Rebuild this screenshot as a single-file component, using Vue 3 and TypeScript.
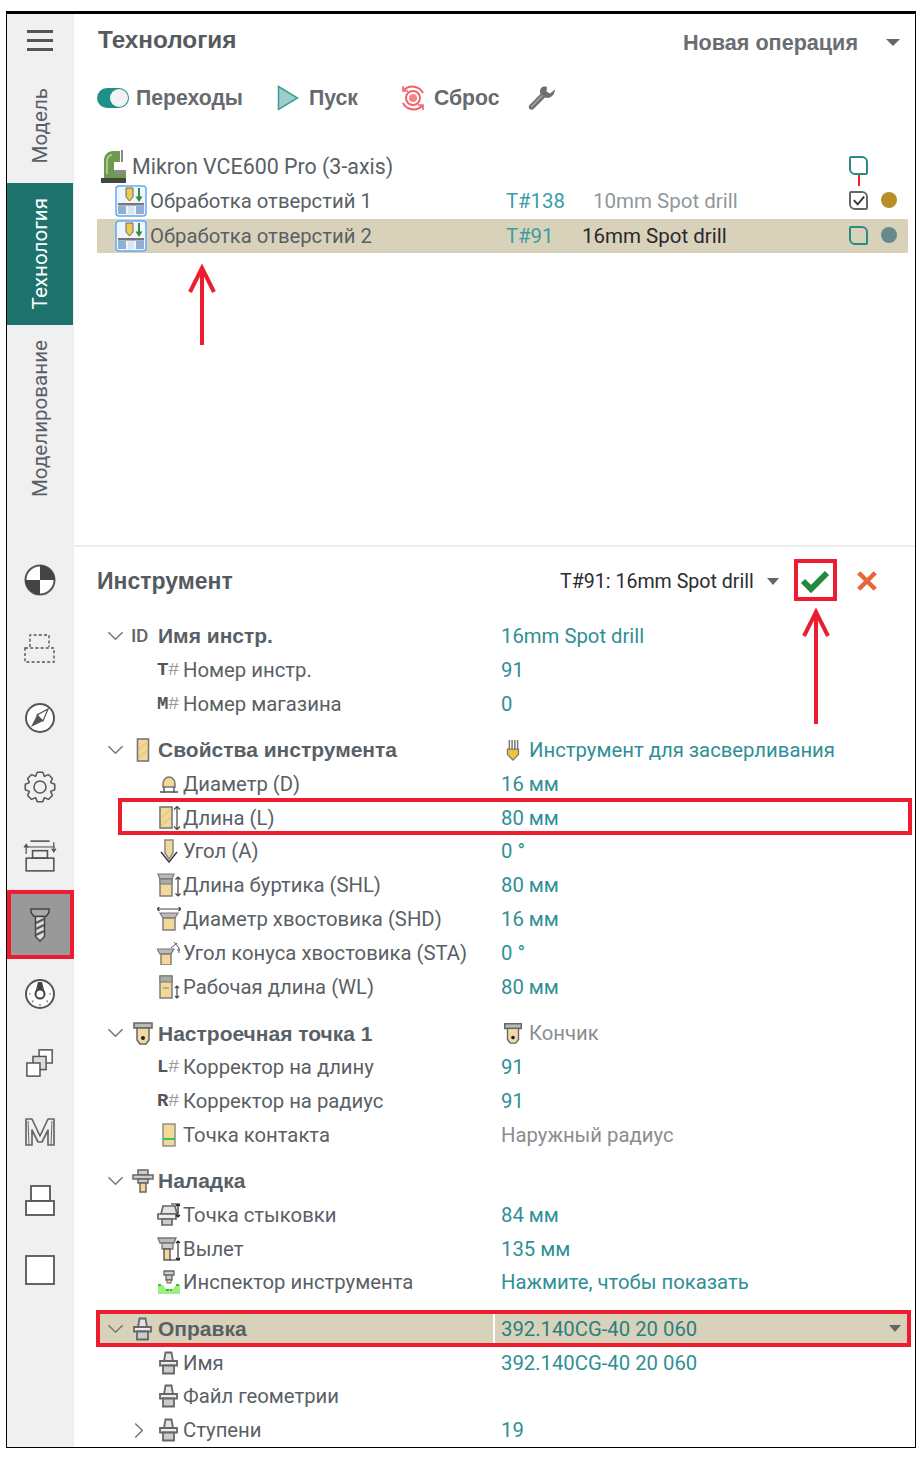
<script setup lang="ts">
type Row = {
  label: string
  head?: boolean
  arrow?: 'down' | 'right'
  icon?: string
  tag?: [string, string]
  val?: string
  muted?: boolean
  valIcon?: string
  hl?: boolean
}

const groups: Row[][] = [
  [
    { label: 'Имя инстр.', head: true, arrow: 'down', tag: ['ID', ''], val: '16mm Spot drill' },
    { label: 'Номер инстр.', tag: ['T', '#'], val: '91' },
    { label: 'Номер магазина', tag: ['M', '#'], val: '0' },
  ],
  [
    { label: 'Свойства инструмента', head: true, arrow: 'down', icon: 'i-bar', val: 'Инструмент для засверливания', valIcon: 'i-drill' },
    { label: 'Диаметр (D)', icon: 'i-dia', val: '16 мм' },
    { label: 'Длина (L)', icon: 'i-len', val: '80 мм' },
    { label: 'Угол (A)', icon: 'i-ang', val: '0 °' },
    { label: 'Длина буртика (SHL)', icon: 'i-shl', val: '80 мм' },
    { label: 'Диаметр хвостовика (SHD)', icon: 'i-shd', val: '16 мм' },
    { label: 'Угол конуса хвостовика (STA)', icon: 'i-sta', val: '0 °' },
    { label: 'Рабочая длина (WL)', icon: 'i-wl', val: '80 мм' },
  ],
  [
    { label: 'Настроечная точка 1', head: true, arrow: 'down', icon: 'i-set', val: 'Кончик', valIcon: 'i-set', muted: true },
    { label: 'Корректор на длину', tag: ['L', '#'], val: '91' },
    { label: 'Корректор на радиус', tag: ['R', '#'], val: '91' },
    { label: 'Точка контакта', icon: 'i-contact', val: 'Наружный радиус', muted: true },
  ],
  [
    { label: 'Наладка', head: true, arrow: 'down', icon: 'i-nal', val: '' },
    { label: 'Точка стыковки', icon: 'i-dock', val: '84 мм' },
    { label: 'Вылет', icon: 'i-vyl', val: '135 мм' },
    { label: 'Инспектор инструмента', icon: 'i-insp', val: 'Нажмите, чтобы показать' },
  ],
  [
    { label: 'Оправка', head: true, arrow: 'down', icon: 'i-hold', val: '392.140CG-40 20 060', hl: true },
    { label: 'Имя', icon: 'i-hold', val: '392.140CG-40 20 060' },
    { label: 'Файл геометрии', icon: 'i-hold', val: '' },
    { label: 'Ступени', arrow: 'right', icon: 'i-hold', val: '19' },
  ],
]

function gearPath(): string {
  const teeth = 8
  const pts: string[] = []
  for (let i = 0; i < teeth; i++) {
    const a = (i / teeth) * Math.PI * 2
    const step = (Math.PI * 2) / teeth
    const spec: [number, number][] = [
      [-0.5, 11.5],
      [-0.24, 15],
      [0.24, 15],
      [0.5, 11.5],
    ]
    for (const [f, r] of spec) {
      const t = a + f * step
      pts.push(`${(16 + r * Math.cos(t)).toFixed(2)} ${(16 + r * Math.sin(t)).toFixed(2)}`)
    }
  }
  return 'M' + pts.join('L') + 'Z'
}
const gear = gearPath()
</script>

<template>
  <div class="page">
    <svg class="defs" width="0" height="0" aria-hidden="true">
      <defs>
        <symbol id="i-op" viewBox="0 0 32 32">
          <rect x="1" y="1" width="30" height="30" rx="3" fill="#eef5fd" stroke="#64a9ef" stroke-width="1.500" />
          <path d="M11 3h7v9l-3.500 4-3.500-4z" fill="#eccb4e" stroke="#666" />
          <path d="M24 3v11" stroke="#2f8f3a" stroke-width="2" />
          <path d="M20.500 11.500L24 17l3.500-5.500z" fill="#2f8f3a" />
          <path d="M3 18h26v2.500H3z" fill="#777" />
          <path d="M3 21h8v8H3zM21 21h8v8h-8z" fill="#8fb0d4" />
          <path d="M13 21h6v8h-6z" fill="#d8e5f4" />
        </symbol>
        <symbol id="i-bar" viewBox="0 0 24 24">
          <rect x="6.500" y="1" width="11" height="22" fill="#f3d998" stroke="#777" stroke-width="1.600" />
          <path d="M7.500 12l9-8M7.500 20l9-8" stroke="#e2c880" stroke-width="1.500" />
        </symbol>
        <symbol id="i-drill" viewBox="0 0 24 24">
          <path d="M8 1v11M11 1v11M14 1v11M17 1v11" stroke="#777" stroke-width="1.600" />
          <path d="M6 11h12v6l-6 6-6-6z" fill="#ecc53f" stroke="#777" stroke-width="1.400" />
        </symbol>
        <symbol id="i-dia" viewBox="0 0 24 24">
          <path d="M6 12a6 7 0 1 1 12 0v3H6z" fill="#f3d998" stroke="#777" stroke-width="1.500" />
          <path d="M7 15v6M17 15v6M3 20h18" stroke="#555" stroke-width="1.400" fill="none" />
        </symbol>
        <symbol id="i-len" viewBox="0 0 24 24">
          <rect x="3" y="1" width="12" height="21" fill="#f3d998" stroke="#777" stroke-width="1.600" />
          <path d="M4 12l10-9M4 20l10-9" stroke="#e2c880" stroke-width="1.500" />
          <path d="M20 1v22M17 3.500l3-3 3 3M17 20.500l3 3 3-3" stroke="#444" stroke-width="1.200" fill="none" />
        </symbol>
        <symbol id="i-ang" viewBox="0 0 24 24">
          <path d="M8 1h8v13l-4 6-4-6z" fill="#f3d998" stroke="#888" stroke-width="1.500" />
          <path d="M4 13l8 10 8-10" fill="none" stroke="#333" stroke-width="1.400" />
        </symbol>
        <symbol id="i-shl" viewBox="0 0 24 24">
          <path d="M1 1h16l-2 5H3z" fill="#bbb" stroke="#777" stroke-width="1.200" />
          <rect x="3" y="6" width="12" height="17" fill="#f3d998" stroke="#777" stroke-width="1.400" />
          <rect x="3" y="6" width="12" height="5" fill="#aaa" stroke="#777" stroke-width="1" />
          <path d="M21 4v19M18.500 6.500l2.500-2.500 2.500 2.500M18.500 20.500l2.500 2.500 2.500-2.500" stroke="#444" stroke-width="1.200" fill="none" />
        </symbol>
        <symbol id="i-shd" viewBox="0 0 24 24">
          <path d="M0 2h24M2.500 0l-2.500 2 2.500 2M21.500 0l2.500 2-2.500 2" stroke="#444" stroke-width="1.100" fill="none" />
          <path d="M3 6h18l-3 5H6z" fill="#bbb" stroke="#777" stroke-width="1.200" />
          <rect x="6" y="11" width="12" height="12" fill="#f3d998" stroke="#777" stroke-width="1.400" />
        </symbol>
        <symbol id="i-sta" viewBox="0 0 24 24">
          <path d="M0 8h17l-3 5H3z" fill="#bbb" stroke="#777" stroke-width="1.200" />
          <rect x="4" y="13" width="10" height="11" fill="#f3d998" stroke="#777" stroke-width="1.400" />
          <path d="M14 7l6-5M17 1l5 6v5M20 9h3" stroke="#555" stroke-width="1" fill="none" />
        </symbol>
        <symbol id="i-wl" viewBox="0 0 24 24">
          <rect x="3" y="1" width="12" height="22" fill="#f3d998" stroke="#777" stroke-width="1.400" />
          <rect x="3" y="1" width="12" height="6" fill="#aaa" stroke="#777" stroke-width="1" />
          <path d="M6 13h6" stroke="#999" stroke-width="1.400" />
          <path d="M20 11v12M18 13l2-2 2 2M18 21l2 2 2-2" stroke="#444" stroke-width="1.200" fill="none" />
        </symbol>
        <symbol id="i-set" viewBox="0 0 24 24">
          <path d="M3 2h18v5H3z" fill="#bbb" stroke="#666" stroke-width="1.600" />
          <path d="M6 7h12v12l-3 4H9l-3-4z" fill="#f0d9a4" stroke="#666" stroke-width="1.500" />
          <circle cx="12" cy="17" r="2" fill="#222" />
        </symbol>
        <symbol id="i-contact" viewBox="0 0 24 24">
          <rect x="6" y="1" width="12" height="22" fill="#f3d998" stroke="#888" stroke-width="1.400" />
          <path d="M6 16h12" stroke="#39c463" stroke-width="2" />
        </symbol>
        <symbol id="i-nal" viewBox="0 0 24 24">
          <path d="M7 1h10v5H7z" fill="#ccc" stroke="#666" stroke-width="1.500" />
          <path d="M2 6h20v4H2z" fill="#ccc" stroke="#666" stroke-width="1.500" />
          <path d="M7 10h10v4H7z" fill="#ccc" stroke="#666" stroke-width="1.500" />
          <rect x="9" y="14" width="6" height="9" fill="#f3d998" stroke="#666" stroke-width="1.500" />
        </symbol>
        <symbol id="i-hold" viewBox="0 0 24 24">
          <path d="M8.500 1.500h6l1.500 8.500H7z" fill="#e4e4e4" stroke="#666" stroke-width="1.800" />
          <path d="M3 10h17v4.500H3z" fill="#eee" stroke="#666" stroke-width="1.800" />
          <path d="M6 14.500h11v8H6z" fill="#ccc" stroke="#666" stroke-width="1.800" />
        </symbol>
        <symbol id="i-dock" viewBox="0 0 24 24">
          <path d="M6 3h12l2 8H4z" fill="#e4e4e4" stroke="#666" stroke-width="1.700" />
          <path d="M1 11h18v5H1z" fill="#eee" stroke="#666" stroke-width="1.700" />
          <path d="M5 16h10v6H5z" fill="#ccc" stroke="#666" stroke-width="1.700" />
          <path d="M21 1v13M19 3l2-2 2 2M19 12l2 2 2-2M14 1h9" stroke="#222" stroke-width="1.200" fill="none" />
        </symbol>
        <symbol id="i-vyl" viewBox="0 0 24 24">
          <path d="M1 1h18l-2 5H3z" fill="#bbb" stroke="#777" stroke-width="1.300" />
          <path d="M5 6h11v6H5z" fill="#ccc" stroke="#777" stroke-width="1.300" />
          <rect x="7" y="12" width="6" height="11" fill="#f3d998" stroke="#555" stroke-width="1.400" />
          <path d="M21 4v19M19 6l2-2 2 2M19 21l2 2 2-2M13 23h10" stroke="#222" stroke-width="1.100" fill="none" />
        </symbol>
        <symbol id="i-insp" viewBox="0 0 24 24">
          <path d="M7 1h10v4H7zM9 5h6v5H9z" fill="#ccc" stroke="#666" stroke-width="1.300" />
          <rect x="10" y="10" width="4" height="3" fill="#f3d998" stroke="#666" stroke-width="1" />
          <path d="M1 15h5l3 4h7l3-4h4v9H1z" fill="#9df07f" />
          <path d="M1 15h4M19 15h4M9 20h6" stroke="#1aa01a" stroke-width="1.300" stroke-dasharray="3 1" />
        </symbol>
      </defs>
    </svg>

    <div class="frame">
      <aside class="side">
        <div class="burger"><i /><i /><i /></div>
        <div class="tab tab-model"><span>Модель</span></div>
        <div class="tab tab-tech"><span>Технология</span></div>
        <div class="tab tab-mod"><span>Моделирование</span></div>

        <div class="tools">
          <div class="tool">
            <svg viewBox="0 0 32 32" width="32" height="32">
              <circle cx="16" cy="16" r="14.500" fill="#fff" stroke="#555" stroke-width="2" />
              <path d="M16 16V1.500A14.500 14.500 0 0 1 30.500 16zM16 16v14.500A14.500 14.500 0 0 1 1.500 16z" fill="#444" />
            </svg>
          </div>
          <div class="tool">
            <svg viewBox="0 0 32 32" width="32" height="32" fill="none" stroke="#555" stroke-width="1.400" stroke-dasharray="3 2.200">
              <path d="M6 14V2h19v12" />
              <rect x="1" y="15" width="29" height="14" />
            </svg>
          </div>
          <div class="tool">
            <svg viewBox="0 0 32 32" width="32" height="32">
              <circle cx="16" cy="16" r="14" fill="#fff" stroke="#555" stroke-width="2" />
              <path d="M24 7L13 13l-6 12 12-6z" fill="#555" />
              <path d="M24 7L13 13l6 6z" fill="#fff" stroke="#555" stroke-width="1.200" />
            </svg>
          </div>
          <div class="tool">
            <svg viewBox="0 0 32 32" width="32" height="32" fill="none" stroke="#555" stroke-width="1.500">
              <path :d="gear" stroke-linejoin="round" />
              <circle cx="16" cy="16" r="6" />
            </svg>
          </div>
          <div class="tool">
            <svg viewBox="0 0 32 32" width="34" height="34" fill="none" stroke="#555" stroke-width="1.500">
              <path d="M7 2h18" />
              <path d="M3 14V5M1 8l2-3 2 3M29 3v9M27 9l2 3 2-3" stroke-width="1.200" />
              <path d="M2 7.500h28" stroke-width="1" />
              <rect x="9" y="11" width="14" height="7" />
              <rect x="3" y="18" width="26" height="12" />
            </svg>
          </div>
          <div class="tool tool-on">
            <svg viewBox="0 0 20 34" width="20" height="34">
              <path d="M1 1h18v3.500l-3 4H4l-3-4z" fill="#aaa" stroke="#444" stroke-width="1.500" />
              <path d="M5.500 8.500h9v20L10 33l-4.500-4.500z" fill="#ddd" stroke="#444" stroke-width="1.500" />
              <path d="M6 15l8-4M6 21l8-4M6 27l8-4" stroke="#555" stroke-width="2" />
            </svg>
          </div>
          <div class="tool">
            <svg viewBox="0 0 32 32" width="32" height="32">
              <circle cx="16" cy="16" r="14" fill="#fff" stroke="#555" stroke-width="2" />
              <path d="M14 4h4l2.500 10h-9z" fill="#444" />
              <circle cx="16" cy="16" r="4.500" fill="#fff" stroke="#444" stroke-width="2" />
              <path d="M5 16h2M25 16h2M8 24l1.500-1.500M24 24l-1.500-1.500M16 26v2" stroke="#777" stroke-width="1.200" />
            </svg>
          </div>
          <div class="tool">
            <svg viewBox="0 0 32 32" width="30" height="30" stroke="#555" stroke-width="1.600">
              <rect x="15" y="2" width="14" height="14" fill="#fff" />
              <rect x="8.500" y="9" width="14" height="14" fill="#ddd" />
              <rect x="2" y="16" width="14" height="14" fill="#fff" />
            </svg>
          </div>
          <div class="tool">
            <svg viewBox="0 0 32 32" width="32" height="32" fill="none" stroke="#666" stroke-width="1.700">
              <path d="M2 3h6l8 17 8-17h6v26h-6V14l-6 12h-4L8 14v15H2z" stroke-linejoin="round" />
              <path d="M4 5l1 24M28 5l-1 24" stroke-width="1" />
            </svg>
          </div>
          <div class="tool">
            <svg viewBox="0 0 32 32" width="32" height="32" fill="#fff" stroke="#555" stroke-width="1.800">
              <rect x="7" y="1" width="19" height="15" />
              <rect x="2" y="16" width="28" height="14" />
            </svg>
          </div>
          <div class="tool">
            <svg viewBox="0 0 32 32" width="32" height="32">
              <rect x="2" y="2" width="28" height="28" fill="#fff" stroke="#555" stroke-width="1.800" />
            </svg>
          </div>
        </div>
      </aside>

      <main class="main">
        <section class="top">
          <header class="top-head">
            <h1 class="title title-top">Технология</h1>
            <div class="new-op">
              <span>Новая операция</span>
              <i class="caret caret-lg" />
            </div>
          </header>

          <div class="toolbar">
            <span class="toggle"><i /></span>
            <span class="tb-label tb-a">Переходы</span>
            <svg class="tb-play" viewBox="0 0 22 26" width="22" height="26">
              <path d="M1.500 1.500L20.500 13 1.500 24.500z" fill="#9ccfca" stroke="#3f9d97" stroke-width="1.500" />
            </svg>
            <span class="tb-label tb-b">Пуск</span>
            <svg class="tb-reset" viewBox="0 0 26 28" width="26" height="28" fill="none" stroke="#f0626a" stroke-width="2">
              <path d="M4 6a12 12 0 0 1 19 3M22 22a12 12 0 0 1-19-3" />
              <path d="M3 2v5h5M23 26v-5h-5" stroke-width="1.600" />
              <circle cx="13" cy="14" r="7" />
              <circle cx="13" cy="14" r="4" fill="#f0858b" stroke="none" />
            </svg>
            <span class="tb-label tb-c">Сброс</span>
            <svg class="tb-wrench" viewBox="0 0 28 26" width="28" height="26">
              <path d="M27 4.500l-5 4-3.500-2 .5-4.500C15.500.5 12 2.500 12 6.500c0 1 .2 1.800.5 2.500L1.500 20c-1 1-1 3 0 4s3 1 4 0L17 12.500c4 1.500 9.500-1 10-8z" fill="#6f6f6f" />
              <path d="M3 22L14.500 10.500" stroke="#a8a8a8" stroke-width="1.500" />
            </svg>
          </div>

          <div class="tree">
            <div class="tree-root">
              <svg class="machine" viewBox="0 0 27 33" width="27" height="33">
                <path d="M4 29V10C4 5 8 1 13 1h7v11h-6v12H4z" fill="#6c9b4e" />
                <path d="M7 26V11c0-3 2-6 5-6" stroke="#a6c88a" stroke-width="2" fill="none" />
                <path d="M22 0v12" stroke="#888" stroke-width="2" />
                <path d="M14 20h12v4H14z" fill="#8b8b8b" />
                <path d="M4 24h22v4H4z" fill="#6c9b4e" />
                <path d="M1 28h25v5H1z" fill="#444" />
              </svg>
              <span class="root-label">Mikron VCE600 Pro (3-axis)</span>
              <span class="chk chk-root"><i class="link" /></span>
            </div>

            <div class="op">
              <svg class="op-ic" width="32" height="32"><use href="#i-op" /></svg>
              <span class="op-label">Обработка отверстий 1</span>
              <span class="op-t">T#138</span>
              <span class="op-tool dim">10mm Spot drill</span>
              <span class="chk chk-grey">
                <svg viewBox="0 0 16 14" width="14" height="12"><path d="M2 6l4.500 5L14 2" fill="none" stroke="#333" stroke-width="2.200" /></svg>
              </span>
              <i class="dot dot-gold" />
            </div>

            <div class="op op-on">
              <svg class="op-ic" width="32" height="32"><use href="#i-op" /></svg>
              <span class="op-label">Обработка отверстий 2</span>
              <span class="op-t">T#91</span>
              <span class="op-tool dark">16mm Spot drill</span>
              <span class="chk" />
              <i class="dot dot-slate" />
            </div>
          </div>
        </section>

        <section class="lower">
          <header class="low-head">
            <h2 class="title title-low">Инструмент</h2>
            <span class="tool-sel">T#91: 16mm Spot drill</span>
            <i class="caret" />
            <svg class="ok" viewBox="0 0 30 24" width="30" height="24">
              <path d="M3 12l8 8L27 4" fill="none" stroke="#22893f" stroke-width="6" />
            </svg>
            <svg class="no" viewBox="0 0 24 24" width="22" height="22">
              <path d="M3 3l18 18M21 3L3 21" stroke="#e4693a" stroke-width="5" />
            </svg>
          </header>

          <div v-for="(g, gi) in groups" :key="gi" class="group">
            <div v-for="r in g" :key="r.label" class="row" :class="{ 'row-head': r.head, 'row-hl': r.hl }">
              <div class="name">
                <span class="arrow">
                  <svg v-if="r.arrow === 'down'" viewBox="0 0 18 10" width="17" height="10">
                    <path d="M1.500 1l7.500 7.500L16.500 1" fill="none" stroke="#777" stroke-width="1.600" />
                  </svg>
                  <svg v-else-if="r.arrow === 'right'" viewBox="0 0 10 18" width="10" height="17">
                    <path d="M1 1.500L8.500 9 1 16.500" fill="none" stroke="#777" stroke-width="1.600" />
                  </svg>
                </span>
                <span class="icon">
                  <svg v-if="r.icon" width="24" height="24"><use :href="'#' + r.icon" /></svg>
                  <span v-else-if="r.tag" class="tag"><b>{{ r.tag[0] }}</b><em>{{ r.tag[1] }}</em></span>
                </span>
                <span class="label">{{ r.label }}</span>
              </div>
              <div class="val" :class="{ muted: r.muted }">
                <svg v-if="r.valIcon" class="val-ic" width="22" height="22"><use :href="'#' + r.valIcon" /></svg>
                <span>{{ r.val }}</span>
                <i v-if="r.hl" class="caret caret-end" />
              </div>
            </div>
          </div>
        </section>
      </main>
    </div>

    <!-- annotations laid over the screenshot -->
    <svg class="notes" width="922" height="1459" viewBox="0 0 922 1459" fill="none" stroke="#ed1c2e" stroke-width="4">
      <path d="M202 345V270M190 292l12-24 12 24" />
      <path d="M816 724V614M804 636l12-24 12 24" />
      <rect x="796" y="561" width="39" height="38" />
      <rect x="120" y="800" width="790" height="33" />
      <rect x="9" y="892" width="63" height="65" />
      <rect x="98" y="1312" width="811" height="33" />
    </svg>
  </div>
</template>

<style>
html,
body {
  margin: 0;
  background: #fff;
}
</style>

<style scoped>
.page {
  position: relative;
  width: 922px;
  height: 1459px;
  padding: 11px 0 0 6px;
  box-sizing: border-box;
  overflow: hidden;
  font-family: Roboto, "Liberation Sans", Arial, sans-serif;
  font-size: 20.300px;
  color: #5a5f66;
}
.defs {
  position: absolute;
}
.frame {
  display: flex;
  width: 910px;
  height: 1437px;
  box-sizing: border-box;
  border: 1.500px solid #000;
  border-top-width: 3px;
  overflow: hidden;
}

/* sidebar */
.side {
  width: 67px;
  flex: none;
  background: #f0f0f0;
  border-right: 1px solid #ececec;
  box-sizing: border-box;
  display: flex;
  flex-direction: column;
}
.burger {
  height: 52px;
  flex: none;
  display: flex;
  flex-direction: column;
  align-items: center;
  justify-content: center;
  gap: 6px;
}
.burger i {
  display: block;
  width: 26px;
  height: 3px;
  background: #555;
}
.tab {
  flex: none;
  display: flex;
  align-items: center;
  justify-content: center;
  font-size: 20.600px;
}
.tab span {
  writing-mode: vertical-rl;
  transform: rotate(180deg);
  white-space: nowrap;
}
.tab-model {
  height: 117px;
  padding-top: 2px;
  box-sizing: border-box;
}
.tab-tech {
  height: 142px;
  background: #1e736f;
  color: #fff;
}
.tab-mod {
  height: 185px;
  padding-top: 2px;
  box-sizing: border-box;
}
.tools {
  margin-top: 35px;
  display: flex;
  flex-direction: column;
}
.tool {
  height: 69px;
  flex: none;
  display: flex;
  align-items: center;
  justify-content: center;
}
.tool-on {
  background: #999;
}

/* main */
.main {
  flex: 1;
  min-width: 0;
  display: flex;
  flex-direction: column;
}
.top {
  height: 533px;
  flex: none;
  border-bottom: 2px solid #eee;
  box-sizing: border-box;
  padding-left: 23px;
}
.top-head {
  height: 54px;
  display: flex;
  align-items: center;
  justify-content: space-between;
  padding: 0 15px 0 1px;
}
.title {
  margin: 0;
  font-family: "Liberation Sans", Arial, sans-serif;
  font-weight: 700;
  color: #555a60;
}
.title-top {
  font-size: 24.300px;
  padding-bottom: 2px;
}
.new-op {
  display: flex;
  align-items: center;
  gap: 28px;
  font-family: "Liberation Sans", Arial, sans-serif;
  font-weight: 700;
  font-size: 21.600px;
  color: #6a6d72;
  padding-top: 3px;
}
.caret {
  display: block;
  flex: none;
  width: 0;
  height: 0;
  border-left: 6px solid transparent;
  border-right: 6px solid transparent;
  border-top: 7px solid #666;
}
.caret-lg {
  border-left-width: 7px;
  border-right-width: 7px;
}
.toolbar {
  height: 60px;
  display: flex;
  align-items: center;
}
.toggle {
  width: 32px;
  height: 20px;
  border-radius: 10px;
  background: #1f8f88;
  position: relative;
  flex: none;
}
.toggle i {
  position: absolute;
  right: 1px;
  top: 1px;
  width: 18px;
  height: 18px;
  border-radius: 50%;
  background: #f2f2f2;
}
.tb-label {
  font-family: "Liberation Sans", Arial, sans-serif;
  font-weight: 700;
  font-size: 21.200px;
  color: #666a70;
  flex: none;
}
.tb-a {
  width: 141px;
  margin-left: 7px;
}
.tb-b {
  width: 91px;
  margin-left: 10px;
}
.tb-c {
  width: 94px;
  margin-left: 8px;
}
.tree {
  padding-top: 21px;
}
.tree-root {
  position: relative;
  height: 35px;
  display: flex;
  align-items: center;
  padding-left: 3px;
}
.root-label {
  margin-left: 5px;
  font-size: 21.400px;
}
.op {
  height: 34.500px;
  display: flex;
  align-items: center;
  position: relative;
  width: 811px;
}
.op-on {
  background: #d9d2ba;
}
.op-ic {
  margin-left: 18px;
  flex: none;
}
.op-label {
  margin-left: 3px;
  width: 356px;
  flex: none;
  white-space: nowrap;
}
.op-t {
  color: #3a9da5;
  width: 87px;
  flex: none;
}
.op-on .op-t {
  width: 76px;
}
.op-tool {
  font-size: 20.500px;
}
.dim {
  color: #92979c;
}
.dark {
  color: #2b2630;
}
.chk {
  position: absolute;
  left: 752px;
  top: 7px;
  width: 15px;
  height: 15px;
  border: 2px solid #2a8a86;
  border-radius: 2px 6px 2px 6px;
  display: flex;
  align-items: center;
  justify-content: center;
}
.chk-grey {
  border-color: #666;
}
.link {
  position: absolute;
  left: 7px;
  top: 17px;
  width: 2px;
  height: 11px;
  background: #ed1c2e;
}
.dot {
  position: absolute;
  left: 784px;
  top: 8px;
  width: 16px;
  height: 16px;
  border-radius: 50%;
}
.dot-gold {
  background: #b98e26;
}
.dot-slate {
  background: #66898c;
}

/* lower */
.lower {
  padding-top: 1px;
}
.low-head {
  height: 66px;
  margin-bottom: 5px;
  display: flex;
  align-items: center;
  padding-left: 23px;
}
.title-low {
  width: 463px;
  flex: none;
  font-size: 23px;
}
.tool-sel {
  color: #2b2c30;
  font-size: 19.600px;
  white-space: nowrap;
  width: 207px;
  flex: none;
}
.ok {
  margin-left: 21px;
  flex: none;
}
.no {
  margin-left: 26px;
  flex: none;
}
.group + .group {
  margin-top: 12.450px;
}
.row {
  height: 33.850px;
  display: flex;
  align-items: center;
  white-space: nowrap;
}
.name {
  width: 427px;
  flex: none;
  display: flex;
  align-items: center;
  height: 100%;
  padding-left: 60px;
  box-sizing: border-box;
}
.arrow {
  width: 23px;
  flex: none;
  display: flex;
  align-items: center;
}
.icon {
  width: 26px;
  flex: none;
  display: flex;
  align-items: center;
}
.row-head .name {
  padding-left: 33px;
}
.row-head .arrow {
  width: 26px;
}
.row-head .icon {
  width: 25px;
}
.row-head .icon svg {
  margin-left: -2px;
}
.row-head .label {
  font-family: "Liberation Sans", Arial, sans-serif;
  font-size: 21px;
  font-weight: 700;
  color: #5a5f66;
  padding-top: 1px;
}
.tag {
  font-family: "Liberation Mono", monospace;
  font-size: 19px;
  letter-spacing: -0.500px;
  color: #555;
  font-weight: 700;
}
.tag b {
  font-weight: 700;
}
.tag em {
  font-style: normal;
  font-weight: 400;
  color: #999;
}
.row-head .tag {
  margin-left: -2px;
  font-family: Roboto, sans-serif;
  font-size: 19px;
  color: #666;
}
.row-head .tag b {
  font-weight: 500;
}
.val {
  flex: 1;
  height: 100%;
  display: flex;
  align-items: center;
  color: #2f8f95;
  position: relative;
}
.val.muted {
  color: #8a8d90;
}
.val-ic {
  margin: 0 5px 0 1px;
  flex: none;
}
.row-hl {
  margin-left: 24px;
  width: 811px;
  background: #d9d2ba;
}
.row-hl .name {
  width: 395px;
  padding-left: 9px;
}
.row-hl .val {
  border-left: 2px solid #fff;
  box-sizing: border-box;
  padding-left: 6px;
  color: #2a7f80;
}
.caret-end {
  position: absolute;
  right: 8px;
  top: 13px;
}
.notes {
  position: absolute;
  left: 0;
  top: 0;
  pointer-events: none;
}
</style>
